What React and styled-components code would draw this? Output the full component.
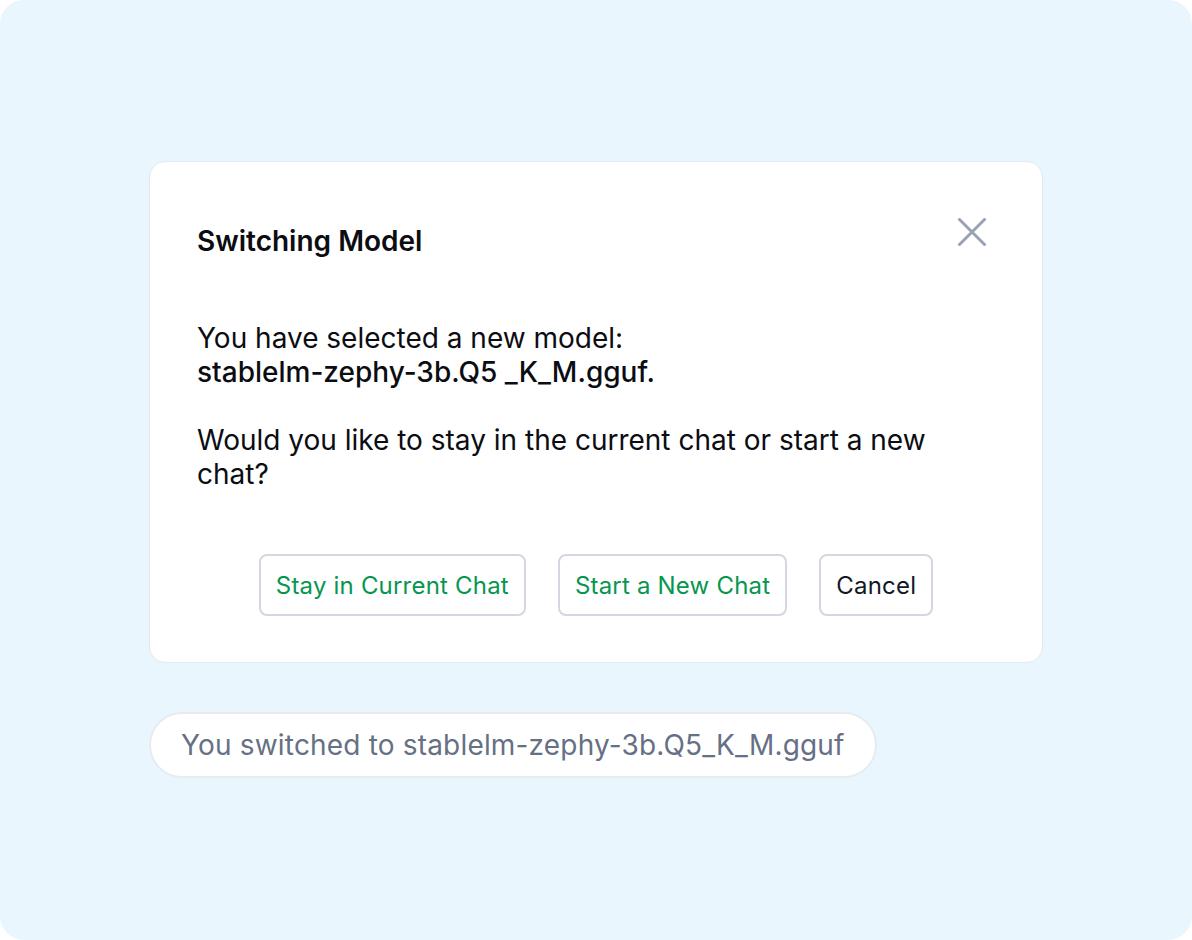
import React from "react";
import styled, { createGlobalStyle } from "styled-components";

const Global = createGlobalStyle`
  html, body { margin: 0; padding: 0; background: #ffffff; }
  body { font-family: Inter, "Noto Sans", sans-serif; -webkit-font-smoothing: antialiased; }
`;

const Frame = styled.div`
  width: 1192px;
  height: 940px;
  box-sizing: border-box;
  background: #eaf6fe;
  border-radius: 24px;
  padding: 161px 149px 0;
  display: flex;
  flex-direction: column;
  align-items: flex-start;
  gap: 49px;
`;

const Dialog = styled.div`
  width: 894px;
  box-sizing: border-box;
  background: #ffffff;
  border: 1px solid #e3e8ef;
  border-radius: 16px;
  padding: 56px 47px 46px;
  display: flex;
  flex-direction: column;
`;

const Header = styled.div`
  display: flex;
  justify-content: space-between;
  align-items: flex-start;
`;

const Title = styled.h2`
  margin: 7px 0 0;
  font-size: 28px;
  line-height: 32px;
  font-weight: 600;
  color: #0b0d12;
`;

const Close = styled.button`
  border: none;
  background: transparent;
  padding: 0;
  margin-right: 9px;
  width: 28px;
  height: 28px;
  cursor: pointer;
  display: flex;
`;

const Body = styled.div`
  margin-top: 64px;
  max-width: 760px;
  font-size: 28px;
  line-height: 34px;
  color: #0b0d12;
`;

const Para = styled.p`
  margin: 0 0 34px;
  &:last-child { margin-bottom: 0; }
`;

const Model = styled.span`
  font-weight: 500;
`;

const Actions = styled.div`
  margin-top: 63px;
  display: flex;
  justify-content: center;
  gap: 32px;
`;

const Button = styled.button`
  height: 62px;
  box-sizing: border-box;
  padding: 0 15px;
  border: 2px solid #d3d8e0;
  border-radius: 8px;
  background: #ffffff;
  font-family: Inter, sans-serif;
  font-size: 24px;
  letter-spacing: 0.2px;
  font-weight: 400;
  color: ${(p) => (p.$tone === "primary" ? "#07964f" : "#111827")};
  cursor: pointer;
`;

const Notice = styled.div`
  box-sizing: border-box;
  height: 66px;
  padding: 0 30px;
  display: flex;
  align-items: center;
  background: #ffffff;
  border: 2px solid #e6ebf1;
  border-radius: 33px;
  font-size: 28px;
  letter-spacing: 0.18px;
  color: #667085;
`;

function XIcon() {
  return (
    <svg width="28" height="28" viewBox="0 0 28 28" fill="none">
      <path d="M1.5 1.5 L26.5 26.5 M26.5 1.5 L1.5 26.5" stroke="#98a2b3" strokeWidth="3" strokeLinecap="round" />
    </svg>
  );
}

export default function App() {
  return (
    <>
      <Global />
      <Frame>
        <Dialog>
          <Header>
            <Title>Switching Model</Title>
            <Close aria-label="Close">
              <XIcon />
            </Close>
          </Header>
          <Body>
            <Para>
              You have selected a new model:
              <br />
              <Model>stablelm-zephy-3b.Q5 _K_M.gguf.</Model>
            </Para>
            <Para>Would you like to stay in the current chat or start a new chat?</Para>
          </Body>
          <Actions>
            <Button $tone="primary">Stay in Current Chat</Button>
            <Button $tone="primary">Start a New Chat</Button>
            <Button>Cancel</Button>
          </Actions>
        </Dialog>
        <Notice>You switched to stablelm-zephy-3b.Q5_K_M.gguf</Notice>
      </Frame>
    </>
  );
}
